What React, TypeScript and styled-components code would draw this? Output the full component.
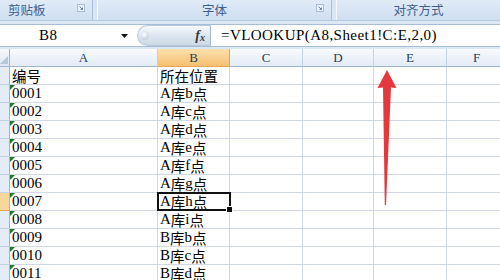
import React from "react";
import styled, { createGlobalStyle, css } from "styled-components";

const GlobalStyle = createGlobalStyle`
  html, body {
    margin: 0;
    padding: 0;
    background: #ffffff;
  }
`;

const columns = [
  { name: "A", width: 148 },
  { name: "B", width: 72 },
  { name: "C", width: 73 },
  { name: "D", width: 71 },
  { name: "E", width: 73 },
  { name: "F", width: 60 },
];

const rows: [string, string][] = [
  ["编号", "所在位置"],
  ["0001", "A库b点"],
  ["0002", "A库c点"],
  ["0003", "A库d点"],
  ["0004", "A库e点"],
  ["0005", "A库f点"],
  ["0006", "A库g点"],
  ["0007", "A库h点"],
  ["0008", "A库i点"],
  ["0009", "B库b点"],
  ["0010", "B库c点"],
  ["0011", "B库d点"],
];

const SELECTED_ROW = 7; // row index of B8

// split text into latin / han runs so each gets its own font
function Mixed({ text }: { text: string }) {
  const parts = text.split(/([\u3000-\u9fff]+)/).filter(Boolean);
  return (
    <>
      {parts.map((p, i) =>
        /[\u3000-\u9fff]/.test(p) ? <Han key={i}>{p}</Han> : <Latin key={i}>{p}</Latin>
      )}
    </>
  );
}

export default function App() {
  return (
    <Page>
      <GlobalStyle />
      <Ribbon>
        <Group $width={92}>
          <GroupLabel $align="left">剪贴板</GroupLabel>
          <Launcher />
        </Group>
        <GroupSep />
        <Group $width={233}>
          <GroupLabel>字体</GroupLabel>
          <Launcher />
        </Group>
        <GroupSep />
        <Group $width={0} $grow>
          <GroupLabel>对齐方式</GroupLabel>
        </Group>
      </Ribbon>

      <FormulaBar>
        <NameBox>B8</NameBox>
        <DropArrow viewBox="0 0 7 4">
          <path d="M0 0h7L3.5 4z" fill="#111" />
        </DropArrow>
        <Expander>
          <Bubble />
          <Fx>
            f<sub>x</sub>
          </Fx>
        </Expander>
        <Formula>=VLOOKUP(A8,Sheet1!C:E,2,0)</Formula>
      </FormulaBar>

      <Sheet>
        <Corner>
          <svg width="8" height="8" viewBox="0 0 8 8">
            <path d="M8 0v8H0z" fill="#b7c7da" />
          </svg>
        </Corner>
        {columns.map((c) => (
          <ColHead key={c.name} $active={c.name === "B"}>
            {c.name}
          </ColHead>
        ))}

        {rows.map((r, i) => (
          <React.Fragment key={i}>
            <RowHead $active={i === SELECTED_ROW} />
            <Cell>
              {i > 0 && <TextFlag />}
              <Mixed text={r[0]} />
            </Cell>
            <Cell $selected={i === SELECTED_ROW}>
              <Mixed text={r[1]} />
              {i === SELECTED_ROW && <FillHandle />}
            </Cell>
            <Cell />
            <Cell />
            <Cell />
            <Cell />
          </React.Fragment>
        ))}
      </Sheet>

      <Arrow viewBox="0 0 500 280" width="500" height="280">
        <path
          d="M387 70 L396.5 88 L391 87.5 L386 205 L384.8 205 L383 87.5 L377.5 88 Z"
          fill="#e5383d"
        />
      </Arrow>
    </Page>
  );
}

function Launcher() {
  return (
    <LauncherIcon viewBox="0 0 8 8">
      <rect x="0.5" y="0.5" width="7" height="7" fill="#eef3fa" stroke="#a9bdd6" />
      <path d="M2.5 2.5l3 3M5.5 3.5v2h-2" stroke="#6d84a3" fill="none" />
    </LauncherIcon>
  );
}

const Page = styled.div`
  position: relative;
  width: 500px;
  height: 280px;
  overflow: hidden;
  display: flex;
  flex-direction: column;
  background: #dce7f4;
`;

const Ribbon = styled.div`
  display: flex;
  height: 21px;
  background: linear-gradient(#e1ebf7, #cfdef0);
  border-bottom: 1px solid #b7cbe3;
`;

const Group = styled.div<{ $width: number; $grow?: boolean }>`
  position: relative;
  display: flex;
  align-items: center;
  ${(p) =>
    p.$grow
      ? css`
          flex: 1;
        `
      : css`
          width: ${p.$width}px;
        `}
`;

const GroupLabel = styled.div<{ $align?: string }>`
  flex: 1;
  padding-left: ${(p) => (p.$align === "left" ? "8px" : "0")};
  text-align: ${(p) => (p.$align === "left" ? "left" : "center")};
  font-family: "Noto Sans CJK SC", sans-serif;
  font-size: 12.5px;
  line-height: 20px;
  color: #41608f;
`;

const LauncherIcon = styled.svg`
  position: absolute;
  right: 7px;
  top: 4px;
  width: 8px;
  height: 8px;
`;

const GroupSep = styled.div`
  width: 4px;
  border-left: 1px solid #a9c0dc;
  border-right: 1px solid #f4f8fc;
  background: #d9e5f3;
`;

const FormulaBar = styled.div`
  display: flex;
  align-items: center;
  height: 22px;
  margin-top: 3px;
  background: #ffffff;
  border-top: 1px solid #a8bdd8;
  border-bottom: 1px solid #a8bdd8;
`;

const NameBox = styled.div`
  width: 121px;
  padding-left: 39px;
  box-sizing: border-box;
  font-family: "Liberation Serif", serif;
  font-size: 15px;
  letter-spacing: 0.5px;
  color: #000;
`;

const DropArrow = styled.svg`
  width: 7px;
  height: 4px;
  margin-right: 9px;
`;

const Expander = styled.div`
  position: relative;
  display: flex;
  align-items: center;
  justify-content: flex-end;
  width: 74px;
  height: 21px;
  box-sizing: border-box;
  padding-right: 5px;
  border-radius: 11px 0 0 11px;
  border: 1px solid #b9c8da;
  border-right: 1px solid #a8b8cc;
  background: linear-gradient(#f6f9fc, #dbe4ef 55%, #cdd9e7);
`;

const Bubble = styled.div`
  position: absolute;
  left: 3px;
  top: 5px;
  width: 8px;
  height: 9px;
  border-radius: 50%;
  background: radial-gradient(circle at 40% 35%, #ffffff, #c8d3e0 70%, #aebdcf);
`;

const Fx = styled.span`
  font-family: "Liberation Serif", serif;
  font-style: italic;
  font-weight: bold;
  font-size: 14px;
  color: #3a3a3a;
  line-height: 1;

  sub {
    font-size: 10px;
    vertical-align: -1px;
  }
`;

const Formula = styled.div`
  flex: 1;
  padding-left: 10px;
  font-family: "Liberation Serif", serif;
  font-size: 15px;
  letter-spacing: 0.45px;
  color: #000;
  white-space: nowrap;
`;

const Sheet = styled.div`
  display: grid;
  grid-template-columns: 10px ${columns.map((c) => `${c.width}px`).join(" ")};
  grid-auto-rows: 18px;
  margin-top: 2px;
  background: #ffffff;
`;

const Corner = styled.div`
  display: flex;
  align-items: flex-end;
  justify-content: flex-end;
  padding: 0 1px 2px 0;
  background: linear-gradient(#f5f8fc, #dfe8f4);
  border-right: 1px solid #9eb6ce;
  border-bottom: 1px solid #9eb6ce;
  box-sizing: border-box;
`;

const ColHead = styled.div<{ $active?: boolean }>`
  display: flex;
  align-items: center;
  justify-content: center;
  box-sizing: border-box;
  border-right: 1px solid ${(p) => (p.$active ? "#e2a655" : "#c3d1e2")};
  border-bottom: 1px solid ${(p) => (p.$active ? "#e2a655" : "#9eb6ce")};
  background: ${(p) =>
    p.$active
      ? "linear-gradient(#fde0ad, #f5c070)"
      : "linear-gradient(#f8fafd, #e3ebf6)"};
  font-family: "Liberation Serif", serif;
  font-size: 13px;
  color: #253d5c;
`;

const RowHead = styled.div<{ $active?: boolean }>`
  box-sizing: border-box;
  border-right: 1px solid #9eb6ce;
  border-bottom: 1px solid ${(p) => (p.$active ? "#e2a655" : "#c3d1e2")};
  background: ${(p) => (p.$active ? "#f9d69b" : "#e4ecf7")};
`;

const Cell = styled.div<{ $selected?: boolean }>`
  position: relative;
  display: flex;
  align-items: flex-end;
  box-sizing: border-box;
  padding: 0 0 1px 2px;
  border-right: 1px solid #d0d7e5;
  border-bottom: 1px solid #d0d7e5;
  white-space: nowrap;
  overflow: visible;
  color: #000;

  ${(p) =>
    p.$selected &&
    css`
      &::after {
        content: "";
        position: absolute;
        left: -1px;
        top: -1px;
        right: -2px;
        bottom: -1px;
        border: 2px solid #111;
        pointer-events: none;
      }
    `}
`;

const Latin = styled.span`
  font-family: "Liberation Serif", serif;
  font-size: 15px;
  line-height: 15px;
`;

const Han = styled.span`
  font-family: "Noto Sans CJK SC", sans-serif;
  font-size: 14.5px;
  line-height: 15px;
`;

const TextFlag = styled.span`
  position: absolute;
  left: 0;
  top: 0;
  width: 0;
  height: 0;
  border-top: 5px solid #1d7a2c;
  border-right: 5px solid transparent;
`;

const FillHandle = styled.span`
  position: absolute;
  right: -4px;
  bottom: -3px;
  width: 5px;
  height: 5px;
  background: #111;
  border: 1px solid #fff;
  z-index: 1;
`;

const Arrow = styled.svg`
  position: absolute;
  left: 0;
  top: 0;
  pointer-events: none;
`;
